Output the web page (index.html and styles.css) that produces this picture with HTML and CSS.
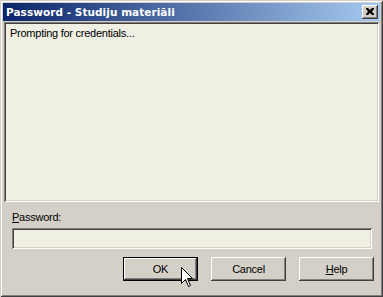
FILE: index.html
```html
<!DOCTYPE html>
<html>
<head>
<meta charset="utf-8">
<link rel="stylesheet" href="styles.css">
</head>
<body>
<div class="window">
  <div class="titlebar">
    <span class="title">Password - Studiju materiāli</span>
    <div class="close">
      <svg width="8" height="7" viewBox="0 0 8 7"><path d="M0 0h2l2 2 2-2h2v1L6 3.5 8 6v1H6L4 5 2 7H0V6l2-2.5L0 1z" fill="#000"/></svg>
    </div>
  </div>
  <div class="log">Prompting for credentials...</div>
  <div class="form">
    <div class="label"><u>P</u>assword:</div>
    <div class="input"></div>
    <div class="buttons">
      <div class="btn default"><span>OK</span></div>
      <div class="btn"><span>Cancel</span></div>
      <div class="btn"><span><u>H</u>elp</span></div>
    </div>
  </div>
  <svg class="cursor" width="13" height="22" viewBox="0 0 13 22"><path d="M0.5 0.5V16.5L4.5 12.5L7.5 19.5L9.5 18.5L6.5 11.5H11.5Z" fill="#fff" stroke="#000" stroke-width="1" stroke-linejoin="miter"/></svg>
</div>
</body>
</html>
```
FILE: styles.css
```css
html, body {
  margin: 0;
  padding: 0;
  background: #d4d0c8;
}
.window {
  position: relative;
  width: 383px;
  height: 297px;
  box-sizing: border-box;
  padding: 3px;
  background: #d4d0c8;
  box-shadow: inset 1px 1px #d4d0c8, inset -1px -1px #404040, inset 2px 2px #ffffff, inset -2px -2px #808080;
  display: flex;
  flex-direction: column;
  font-family: "Liberation Sans", Arial, sans-serif;
  font-size: 11px;
  letter-spacing: -0.25px;
  color: #000;
}
.titlebar {
  height: 18px;
  background: linear-gradient(to right, #0a246a, #a6caf0);
  display: flex;
  align-items: center;
  justify-content: space-between;
  padding: 0 2px 0 3px;
}
.title {
  color: #fff;
  font-weight: bold;
  font-family: "DejaVu Sans", sans-serif;
  letter-spacing: 0.05px;
  font-size: 10.5px;
}
.close {
  width: 16px;
  height: 14px;
  box-sizing: border-box;
  background: #d4d0c8;
  box-shadow: inset -1px -1px #404040, inset 1px 1px #ffffff, inset -2px -2px #808080;
  display: flex;
  align-items: center;
  justify-content: center;
  padding: 0 1px 1px 0;
}
.close svg { display: block; }
.log {
  margin: 1px 1px 0 1px;
  height: 180px;
  box-sizing: border-box;
  background: #f0efe3;
  box-shadow: inset 1px 1px #808080, inset -1px -1px #ffffff, inset 2px 2px #404040, inset -2px -2px #d4d0c8;
  padding: 5px 6px;
  line-height: 13px;
}
.form {
  display: flex;
  flex-direction: column;
  padding: 9px 6px 0 9px;
}
.label {
  line-height: 13px;
}
.input {
  margin-top: 4px;
  margin-right: 2px;
  height: 21px;
  background: #f0efe3;
  box-shadow: inset 1px 1px #808080, inset -1px -1px #ffffff, inset 2px 2px #404040, inset -2px -2px #d4d0c8;
}
.buttons {
  margin-top: 8px;
  display: flex;
  justify-content: flex-end;
  gap: 13px;
}
.btn {
  width: 75px;
  height: 24px;
  box-sizing: border-box;
  background: #d4d0c8;
  box-shadow: inset -1px -1px #404040, inset 1px 1px #ffffff, inset -2px -2px #808080;
  display: flex;
  align-items: center;
  justify-content: center;
  padding-bottom: 1px;
}
.btn.default {
  border: 1px solid #000;
}
.cursor {
  position: absolute;
  left: 181px;
  top: 267px;
}
```
